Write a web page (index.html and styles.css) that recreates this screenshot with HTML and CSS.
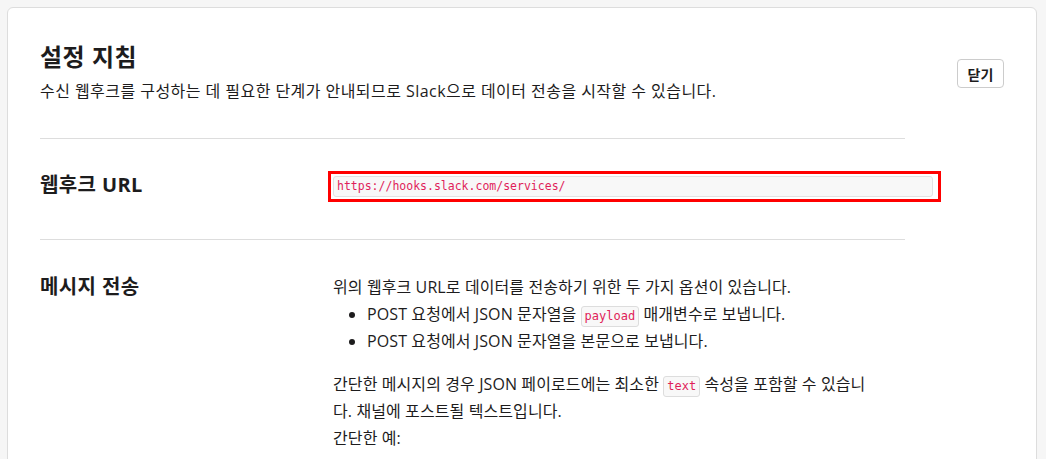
FILE: index.html
```html
<!DOCTYPE html>
<html lang="ko">
<head>
<meta charset="utf-8">
<link rel="stylesheet" href="styles.css">
</head>
<body>
<div class="card">
  <div class="header">
    <div class="header-text">
      <h1 class="title">설정 지침</h1>
      <p class="subtitle">수신 웹후크를 구성하는 데 필요한 단계가 안내되므로 Slack으로 데이터 전송을 시작할 수 있습니다.</p>
    </div>
    <button class="close-btn">닫기</button>
  </div>
  <div class="body">
    <div class="row row-url">
      <h2 class="label">웹후크 URL</h2>
      <div class="value">
        <div class="highlight">
          <div class="url-box"><span class="url">https://hooks.slack.com/services/</span></div>
        </div>
      </div>
    </div>
    <div class="row row-msg">
      <h2 class="label">메시지 전송</h2>
      <div class="value text">
        <p class="para">위의 웹후크 URL로 데이터를 전송하기 위한 두 가지 옵션이 있습니다.</p>
        <ul class="list">
          <li>POST 요청에서 JSON 문자열을 <code class="code">payload</code> 매개변수로 보냅니다.</li>
          <li>POST 요청에서 JSON 문자열을 본문으로 보냅니다.</li>
        </ul>
        <p class="para">간단한 메시지의 경우 JSON 페이로드에는 최소한 <code class="code">text</code> 속성을 포함할 수 있습니다. 채널에 포스트될 텍스트입니다.<br>간단한 예:</p>
      </div>
    </div>
  </div>
</div>
</body>
</html>
```

FILE: styles.css
```css
* { box-sizing: border-box; }
html, body { margin: 0; padding: 0; }
body {
  background: #f6f6f6;
  font-family: "Open Sans", "Noto Sans CJK KR", sans-serif;
  color: #1d1c1d;
  padding: 7px 9px 0 7px;
}
.card {
  background: #fff;
  border: 1px solid #dddddd;
  border-radius: 6px;
  padding: 33px 32px 40px 32px;
  min-height: 600px;
}
.header {
  display: flex;
  align-items: center;
  justify-content: space-between;
  padding-bottom: 36px;
}
.title {
  margin: 0;
  font-size: 24px;
  font-weight: 700;
  line-height: 31px;
  letter-spacing: 0.5px;
}
.subtitle {
  margin: 8px 0 0 0;
  font-size: 16px;
  line-height: 22px;
  letter-spacing: 0.45px;
}
.close-btn {
  font-family: inherit;
  font-size: 14px;
  font-weight: 700;
  color: #1d1c1d;
  background: #fff;
  border: 1px solid #cccccc;
  border-radius: 4px;
  width: 47px;
  height: 29px;
  padding: 0;
  margin-top: 4px;
}
.body {
  width: 865px;
}
.row {
  display: flex;
  border-top: 1px solid #dddddd;
}
.row-url { padding: 32px 0 37px; }
.row-msg { padding: 34px 0 32px; }
.label {
  margin: 0;
  width: 293px;
  flex: none;
  font-size: 20px;
  font-weight: 700;
  line-height: 26px;
  letter-spacing: 0.4px;
}
.row-url .label { padding-top: 1px; }
.value { flex: 1; }
.highlight {
  margin-left: -5px;
  width: 613px;
  border: 3px solid #ff0000;
  padding: 2px 5px 2px 2px;
}
.url-box {
  background: #f8f8f8;
  border: 1px solid #e2e2e2;
  border-radius: 3px;
  height: 21px;
  padding: 0 3px;
  font-family: "DejaVu Sans Mono", monospace;
  font-size: 11.5px;
  line-height: 19px;
  color: #e01e5a;
}
.text {
  font-size: 16px;
  line-height: 27px;
  letter-spacing: 0.1px;
  padding-right: 28px;
}
.para { margin: 0; }
.list {
  margin: 0 0 16px 0;
  padding-left: 34px;
}
.code {
  display: inline-block;
  font-family: "DejaVu Sans Mono", monospace;
  font-size: 12px;
  line-height: 15px;
  letter-spacing: 0;
  color: #e01e5a;
  background: #f8f8f8;
  border: 1px solid #dddddd;
  border-radius: 3px;
  padding: 2px 3px;
}
```
